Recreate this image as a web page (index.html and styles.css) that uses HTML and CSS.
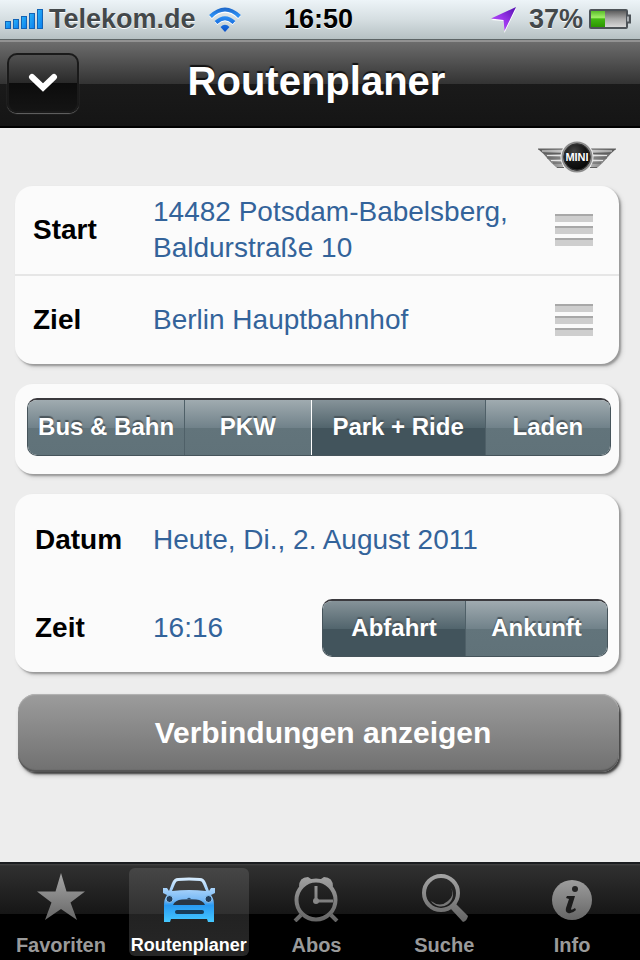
FILE: index.html
```html
<!DOCTYPE html>
<html lang="de">
<head>
<meta charset="utf-8">
<meta name="viewport" content="width=device-width, initial-scale=1">
<title>Routenplaner</title>
<link rel="stylesheet" href="styles.css">
</head>
<body>
<div class="status">
  <div class="status-left">
    <svg class="signal" width="39" height="21" viewBox="0 0 39 21" aria-hidden="true">
      <defs><linearGradient id="bar" x1="0" y1="0" x2="1" y2="1"><stop offset="0" stop-color="#2bb4f5"/><stop offset="1" stop-color="#0a7df0"/></linearGradient></defs>
      <g fill="url(#bar)" stroke="#1263b5">
        <rect x=".5" y="12.500" width="5" height="7"/><rect x="8.500" y="10.500" width="5" height="9"/><rect x="16.500" y="7.500" width="5" height="12"/><rect x="24.500" y="4.500" width="5" height="15"/><rect x="32.500" y=".5" width="5" height="19"/>
      </g>
    </svg>
    <span class="carrier">Telekom.de</span>
    <svg class="wifi" width="34" height="26" viewBox="0 0 34 26" aria-hidden="true">
      <defs><linearGradient id="wave" x1="0" y1="0" x2="0" y2="25" gradientUnits="userSpaceOnUse"><stop offset="0" stop-color="#1b62c4"/><stop offset=".35" stop-color="#2d91f5"/><stop offset="1" stop-color="#0a50c8"/></linearGradient></defs>
      <g fill="none" stroke="#fff" stroke-width="4" transform="translate(0 1)"><path d="M2.500 9.500Q17-4 31.500 9.500M8 15.500Q17 7 26 15.500"/></g>
      <g fill="none" stroke="url(#wave)" stroke-width="4"><path d="M2.500 9.500Q17-4.500 31.500 9.500M8 15.500Q17 7 26 15.500"/></g>
      <path d="M12.500 20Q17 15.500 21.500 20L17 25Z" fill="url(#wave)"/>
    </svg>
  </div>
  <time class="clock">16:50</time>
  <div class="status-right">
    <svg class="locate" width="26" height="26" viewBox="0 0 26 26" aria-hidden="true">
      <defs><linearGradient id="arrow" x1="1" y1="0" x2="0" y2="1"><stop offset="0" stop-color="#5410b0"/><stop offset=".5" stop-color="#9a35ea"/><stop offset="1" stop-color="#bc5cff"/></linearGradient></defs>
      <path d="M25 2L13.500 26L12.500 14L0 13Z" fill="#fff"/><path d="M25 0L13.500 24L12.500 13L0 11.500Z" fill="url(#arrow)"/>
    </svg>
    <span class="percent">37%</span>
    <svg class="battery" width="43" height="21" viewBox="0 0 43 21" aria-hidden="true">
      <defs>
        <linearGradient id="cell" x1="0" y1="0" x2="0" y2="1"><stop offset="0" stop-color="#555"/><stop offset=".5" stop-color="#aaa"/><stop offset="1" stop-color="#ddd"/></linearGradient>
        <linearGradient id="charge" x1="0" y1="0" x2="0" y2="1"><stop offset="0" stop-color="#59bd2a"/><stop offset=".4" stop-color="#a2ef67"/><stop offset=".5" stop-color="#42b812"/><stop offset="1" stop-color="#2c9600"/></linearGradient>
      </defs>
      <rect x="1" y="1" width="37" height="18" rx="1" fill="url(#cell)" stroke="#4d5358" stroke-width="2"/><rect x="2" y="2" width="14" height="16" fill="url(#charge)"/><path d="M38 6.500h3v7h-3" fill="#aab0b4" stroke="#4d5358" stroke-width="2"/>
    </svg>
  </div>
</div>

<header class="header">
  <button class="collapse" type="button" aria-label="Menü">
    <svg width="30" height="20" viewBox="0 0 30 20" aria-hidden="true"><path d="M4 4L15 14.500L26 4" fill="none" stroke="#fff" stroke-width="6" stroke-linecap="round"/></svg>
  </button>
  <h1 class="title">Routenplaner</h1>
</header>

<main class="main">
  <div class="brand">
    <svg width="80" height="34" viewBox="0 0 80 34" role="img" aria-label="MINI">
      <defs>
        <linearGradient id="wing" x1="0" y1="0" x2="1" y2="0"><stop offset="0" stop-color="#555"/><stop offset=".3" stop-color="#aaa"/><stop offset=".5" stop-color="#eee"/><stop offset=".7" stop-color="#aaa"/><stop offset="1" stop-color="#555"/></linearGradient>
        <radialGradient id="disc" cx=".4" cy=".3" r=".8"><stop offset="0" stop-color="#444"/><stop offset=".5" stop-color="#151515"/><stop offset="1" stop-color="#000"/></radialGradient>
      </defs>
      <path d="M1 9H26V28H20Q14 23 10 18Q7 14 1 9ZM79 9H54V28H60Q66 23 70 18Q73 14 79 9Z" fill="url(#wing)"/>
      <path d="M1 9H26M7 13.500H25M10 18H24M16 23H25M20 27.500H27M79 9H54M73 13.500H55M70 18H56M64 23H55M60 27.500H53" fill="none" stroke="#606060"/>
      <path d="M5 11H25M10 15.500H25M14 20.500H25M75 11H55M70 15.500H55M66 20.500H55" stroke="#e4e4e4"/>
      <circle cx="40" cy="17" r="16.500" fill="#ededed"/><circle cx="40" cy="17" r="14.500" fill="url(#disc)" stroke="#8c8c8c" stroke-width="2"/><circle cx="40" cy="17" r="13" fill="none" stroke="#333"/>
      <text class="brand-text" x="40" y="21" text-anchor="middle">MINI</text>
    </svg>
  </div>

  <section class="card">
    <div class="row row-line">
      <span class="label" id="start">Start</span>
      <button class="value" type="button" aria-labelledby="start start-value"><span id="start-value">14482 Potsdam-Babelsberg,<br>Baldurstraße 10</span></button>
      <button class="grip" type="button" aria-label="Start auswählen"><span></span><span></span><span></span></button>
    </div>
    <div class="row">
      <span class="label" id="goal">Ziel</span>
      <button class="value" type="button" aria-labelledby="goal goal-value"><span id="goal-value">Berlin Hauptbahnhof</span></button>
      <button class="grip" type="button" aria-label="Ziel auswählen"><span></span><span></span><span></span></button>
    </div>
  </section>

  <section class="card modes">
    <div class="segments four" role="group" aria-label="Verkehrsmittel">
      <button class="segment" type="button">Bus &amp; Bahn</button>
      <button class="segment" type="button">PKW</button>
      <button class="segment selected" type="button" aria-pressed="true">Park + Ride</button>
      <button class="segment" type="button">Laden</button>
    </div>
  </section>

  <section class="card when">
    <div class="row">
      <span class="label" id="date">Datum</span>
      <button class="value" type="button" aria-labelledby="date date-value"><span id="date-value">Heute, Di., 2. August 2011</span></button>
    </div>
    <div class="row">
      <span class="label" id="time">Zeit</span>
      <button class="value" type="button" aria-labelledby="time time-value"><span id="time-value">16:16</span></button>
      <div class="segments two" role="group" aria-label="Zeitbezug">
        <button class="segment selected" type="button" aria-pressed="true">Abfahrt</button>
        <button class="segment" type="button">Ankunft</button>
      </div>
    </div>
  </section>

  <button class="submit" type="button">Verbindungen anzeigen</button>
</main>

<nav class="tabs">
  <a class="tab" href="#favoriten">
    <svg width="50" height="54" viewBox="0 0 50 54" aria-hidden="true">
      <defs><linearGradient id="metal" x1="0" y1="4" x2="0" y2="52" gradientUnits="userSpaceOnUse"><stop offset="0" stop-color="#a8a8a8"/><stop offset="1" stop-color="#666"/></linearGradient></defs>
      <path d="M25 5L30.500 23.500H49L34.500 34.500L41 52L25 41L9 52L15.500 34.500L1 23.500H19.500Z" fill="url(#metal)"/>
    </svg>
    <span>Favoriten</span>
  </a>
  <a class="tab active" href="#routenplaner" aria-current="page">
    <svg width="54" height="54" viewBox="0 0 54 54" aria-hidden="true">
      <defs><linearGradient id="paint" x1="0" y1="10" x2="0" y2="54" gradientUnits="userSpaceOnUse"><stop offset="0" stop-color="#d6ecff"/><stop offset=".5" stop-color="#77b8f5"/><stop offset=".62" stop-color="#299af2"/><stop offset="1" stop-color="#45c8ff"/></linearGradient></defs>
      <path fill="url(#paint)" fill-rule="evenodd" d="M16 10Q27 9 38 10Q42 10 44 15L47 23L49 20H53V25L49 27Q52 31 52 37V54H46L45 51H9L8 54H2V37Q2 31 5 27L1 25V20H5L7 23L10 15Q12 10 16 10ZM16 13Q14 13 13 16L10 23Q27 21 44 23L41 16Q40 13 38 13Q27 12 16 13Z"/>
      <circle cx="7.500" cy="31" r="3.500" fill="#243d59" stroke="#8cc5f5"/><circle cx="46.500" cy="31" r="3.500" fill="#243d59" stroke="#8cc5f5"/>
      <path d="M11 37Q13 32 20 31.500Q27 31 34 31.500Q41 32 43 37Z" fill="#293644"/><path d="M25 31Q27 28.500 29 31Z" fill="#294e70"/><rect x="13" y="42" width="29" height="4" rx="2" fill="#183c58"/>
    </svg>
    <span>Routenplaner</span>
  </a>
  <a class="tab" href="#abos">
    <svg width="50" height="54" viewBox="0 0 50 54" aria-hidden="true">
      <g stroke="url(#metal)" fill="none"><circle cx="25" cy="32" r="19.500" stroke-width="4"/><path d="M25 18V33H42" stroke-width="3"/><path d="M10 47L4 53M40 47L46 53" stroke-width="4"/></g>
      <path d="M8 19Q8 9 17 9L20 11H30L33 9Q42 9 42 19L35 14H15Z" fill="url(#metal)"/><circle cx="25" cy="33" r="3" fill="#888"/>
    </svg>
    <span>Abos</span>
  </a>
  <a class="tab" href="#suche">
    <svg width="50" height="54" viewBox="0 0 50 54" aria-hidden="true">
      <circle cx="22" cy="25" r="17" fill="none" stroke="url(#metal)" stroke-width="4"/><path d="M32 20A11 11 0 0 1 12 33Q21 40 29 33Q36 27 32 20Z" fill="#777"/><path d="M33 38L36 35L49 48Q48 53 44 54L32 41Z" fill="url(#metal)"/>
    </svg>
    <span>Suche</span>
  </a>
  <a class="tab" href="#info">
    <svg width="50" height="54" viewBox="0 0 50 54" aria-hidden="true">
      <circle cx="25" cy="32" r="20" fill="url(#metal)"/><circle cx="28" cy="21" r="3" fill="#222"/><path d="M20 28H28L24 41Q24 43 28 40L29 42Q25 46 21 45Q18 44 19 40L22 31L19 30Z" fill="#1b1b1b"/>
    </svg>
    <span>Info</span>
  </a>
</nav>
</body>
</html>
```
FILE: styles.css
```css
* {
  box-sizing: border-box;
}

body {
  display: flex;
  flex-direction: column;
  min-height: 100vh;
  margin: 0;
  background: #ededed;
  color: #000;
  font-family: "Liberation Sans", Arial, sans-serif;
  font-size: 28px;
}

button {
  margin: 0;
  padding: 0;
  border: 0;
  background: none;
  font: inherit;
  cursor: pointer;
}

svg {
  display: block;
  flex: none;
}

/* Status bar */
.status {
  display: grid;
  grid-template-columns: 1fr auto 1fr;
  align-items: center;
  height: 40px;
  padding: 0 8px 0 5px;
  border-bottom: 1px solid #5d6566;
  background: linear-gradient(#edf4f8, #d5dee1 50%, #b6c1c3);
  font-size: 27px;
  font-weight: bold;
  text-shadow: 0 1px 0 #fff;
}

.status-left,
.status-right {
  display: flex;
  align-items: center;
}

.status-right {
  justify-content: flex-end;
}

.carrier {
  margin: 0 12px 0 5px;
  color: #43484a;
}

.percent {
  margin: 0 6px 0 12px;
  color: #43484a;
}

/* Title bar */
.header {
  display: grid;
  grid-template-columns: 72px 1fr 72px;
  align-items: center;
  height: 88px;
  padding: 0 14px 2px 7px;
  border-top: 2px solid #929292;
  border-bottom: 2px solid #000;
  background: linear-gradient(#6c6c6c, #333 50%, #1a1a1a 50%, #151515);
}

.collapse {
  display: flex;
  align-items: center;
  justify-content: center;
  height: 60px;
  border-radius: 10px;
  background: linear-gradient(#545454, #292929 50%, #0c0c0c 50%, #151515);
  box-shadow: inset 0 0 0 2px #1a1a1a, 0 1px 1px #666;
}

.title {
  margin: 0;
  color: #fff;
  font-size: 40px;
  line-height: 44px;
  padding-bottom: 4px;
  text-align: center;
  text-shadow: 0 -2px 1px #111;
}

/* Content */
.main {
  display: flex;
  flex: 1;
  flex-direction: column;
  gap: 20px;
  padding: 12px 21px 20px 15px;
}

.brand {
  display: flex;
  justify-content: flex-end;
  height: 26px;
  padding-right: 2px;
}

.brand-text {
  fill: #fff;
  font-size: 11px;
  font-weight: bold;
}

.card {
  border-radius: 18px;
  background: #fbfbfb;
  box-shadow: 2px 2px 2px #999, 3px 3px 4px #ccc;
}

.row {
  display: flex;
  align-items: center;
  min-height: 88px;
  padding: 0 26px 0 18px;
}

.row-line {
  min-height: 90px;
  border-bottom: 2px solid #e6e6e6;
}

.label {
  flex: none;
  width: 120px;
  font-weight: bold;
}

.value {
  flex: 1;
  color: #33639a;
  line-height: 36px;
  text-align: left;
}

.grip {
  display: grid;
  gap: 4px;
}

.grip span {
  width: 38px;
  height: 8px;
  border-top: 2px solid #a8a8a8;
  background: #cecece;
}

.modes {
  padding: 14px 8px 18px 12px;
}

.when {
  padding: 2px 0 0;
}

.when .row {
  padding: 0 11px 0 20px;
}

.when .label {
  width: 118px;
}

.segments {
  display: grid;
  overflow: hidden;
  border: 1px solid #46545b;
  border-top: 2px solid #3b3a3e;
  border-radius: 10px;
}

.four {
  grid-template-columns: 157fr 127fr 175fr 126fr;
}

.two {
  flex: none;
  grid-template-columns: 1fr 1fr;
  width: 286px;
}

.segment {
  height: 55px;
  padding-bottom: 2px;
  background: linear-gradient(#a0abb0, #71828a 50%, #62747b 50%, #607279);
  color: #fff;
  font-size: 24px;
  font-weight: bold;
  text-shadow: 0 -2px 1px #4a555b;
  white-space: nowrap;
}

.segment + .segment {
  border-left: 1px solid #4f6068;
}

.segment.selected {
  background: linear-gradient(#869399, #52656d 50%, #42545c 50%, #42545c);
}

.four .segment.selected {
  border-left-color: #fff;
}

.submit {
  height: 78px;
  margin: 2px 0 0 3px;
  padding-left: 9px;
  border-radius: 18px;
  background: linear-gradient(#9c9c9c, #707070);
  box-shadow: inset 0 1px 1px #b5b5b5, inset 0 -2px 1px #555, 2px 2px 2px #444, 2px 3px 4px #aaa;
  color: #fff;
  font-size: 30px;
  font-weight: bold;
}

/* Tab bar */
.tabs {
  display: grid;
  grid-template-columns: repeat(5, 1fr);
  gap: 8px;
  padding: 4px 8px 4px 1px;
  border-top: 2px solid #1b1d20;
  background: linear-gradient(#444, #303030 2px, #161616 50px, #000 50px);
}

.tab {
  display: flex;
  flex-direction: column;
  align-items: center;
  height: 88px;
  border-radius: 6px;
  color: #9a9a9a;
  font-size: 20px;
  font-weight: bold;
  line-height: 24px;
  text-decoration: none;
}

.tab span {
  margin-top: 11px;
}

.tab.active {
  background: linear-gradient(#464646, #303030 46px, #222 46px, #272727);
  color: #fff;
  font-size: 18px;
}
```
